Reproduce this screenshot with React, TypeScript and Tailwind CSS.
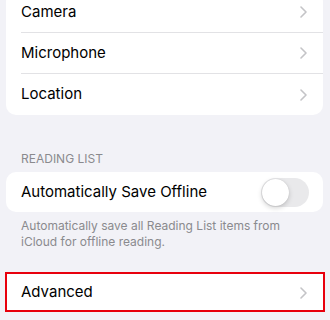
import React from "react";

const font = { fontFamily: "Inter, 'Liberation Sans', sans-serif" };

function Chevron() {
  return (
    <svg width="7" height="12" viewBox="0 0 7 12" fill="none" className="shrink-0">
      <path d="M1 1l5 5-5 5" stroke="#c4c4c7" strokeWidth="1.6" strokeLinecap="round" strokeLinejoin="round" />
    </svg>
  );
}

function LinkRow({ label, last }: { label: string; last?: boolean }) {
  return (
    <div className="flex h-[41px] items-center pl-[15px]">
      <div className={`flex h-full flex-1 items-center justify-between pr-[16px] ${last ? "" : "border-b border-[#e2e2e5]"}`}>
        <span className="text-[15px] text-black">{label}</span>
        <Chevron />
      </div>
    </div>
  );
}

export default function App() {
  return (
    <div className="h-[320px] w-[330px] overflow-hidden bg-[#f2f2f7] pl-[6px] pr-[7px]" style={font}>
      <div className="-mt-[8px] overflow-hidden rounded-[10px] bg-white">
        <LinkRow label="Camera" />
        <LinkRow label="Microphone" />
        <LinkRow label="Location" last />
      </div>

      <div className="mt-[36px] pl-[15px] text-[12px] leading-[16px] text-[#8a8a8e]">READING LIST</div>

      <div className="mt-[5px] flex h-[40px] items-center justify-between rounded-[10px] bg-white pl-[15px] pr-[14px]">
        <span className="text-[15px] text-black">Automatically Save Offline</span>
        <div className="flex h-[29px] w-[48px] items-center rounded-full bg-[#e9e9eb] p-[1px]">
          <div className="h-[27px] w-[27px] rounded-full bg-white shadow-[0_2px_5px_rgba(0,0,0,0.18),0_0_1px_rgba(0,0,0,0.15)]" />
        </div>
      </div>

      <p className="mt-[6px] pl-[15px] pr-[30px] text-[12px] leading-[16px] text-[#8a8a8e]">
        Automatically save all Reading List items from iCloud for offline reading.
      </p>

      <div className="relative mt-[23px] flex h-[39px] items-center justify-between bg-white pl-[15px] pr-[16px]">
        <span className="text-[15px] text-black">Advanced</span>
        <Chevron />
        <div className="pointer-events-none absolute -left-[1px] -right-[2px] -top-[1px] bottom-0 border-2 border-[#e8000d]" />
      </div>
    </div>
  );
}
